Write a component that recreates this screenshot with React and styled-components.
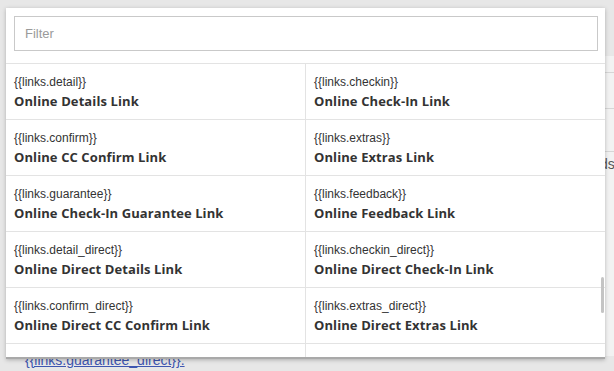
import React from "react";
import styled, { createGlobalStyle } from "styled-components";

const GlobalStyle = createGlobalStyle`
  html, body { margin: 0; padding: 0; }
  body { background: #e7e7e7; font-family: "Liberation Sans", Arial, sans-serif; }
`;

const Page = styled.div`
  position: relative;
  width: 614px;
  height: 371px;
  overflow: hidden;
  background: #e7e7e7;
`;

const BackCard = styled.div`
  margin: 56px 0 0 14px;
  height: 300px;
  background: #f2f2f2;
  display: flex;
  flex-direction: column;
  align-items: flex-end;
`;

const BackLine = styled.div`
  width: 40px;
  height: 1px;
  background: #d6d6d6;
  margin-top: ${(p) => p.$mt}px;
`;

const BackText = styled.div`
  width: 14px;
  font-size: 14px;
  line-height: 15px;
  color: #555;
  margin-top: ${(p) => p.$mt || 0}px;
`;

const BackLink = styled.a`
  position: absolute;
  left: 25px;
  top: 352px;
  font-size: 14px;
  color: #3e56b0;
  text-decoration: underline;
`;

const Panel = styled.div`
  position: absolute;
  left: 6px;
  top: 8px;
  width: 599px;
  height: 349px;
  background: #fff;
  box-shadow: 0 1px 4px rgba(0, 0, 0, 0.25);
  display: flex;
  flex-direction: column;
  overflow: hidden;
  border-bottom: 2px solid #a9a9a9;
`;

const FilterWrap = styled.div`
  padding: 8px 7px 12px 8px;
  border-bottom: 1px solid #e3e3e3;
`;

const FilterInput = styled.input`
  box-sizing: border-box;
  width: 100%;
  height: 35px;
  border: 1px solid #c9c9c9;
  padding: 0 10px;
  font-family: "Liberation Sans", Arial, sans-serif;
  font-size: 13px;
  color: #333;
  outline: none;
  &::placeholder { color: #9a9a9a; }
`;

const List = styled.div`
  position: relative;
  flex: 1;
  overflow: hidden;
  display: grid;
  grid-template-columns: 300px 299px;
  grid-auto-rows: 56px;
  align-content: start;
`;

const Cell = styled.div`
  box-sizing: border-box;
  padding: 9px 8px 0;
  border-bottom: 1px solid #e3e3e3;
  border-right: ${(p) => (p.$left ? "1px solid #e3e3e3" : "none")};
`;

const Code = styled.div`
  font-family: "Liberation Sans", Arial, sans-serif;
  font-size: 12px;
  line-height: 18px;
  color: #333;
`;

const Title = styled.div`
  font-family: "Open Sans", sans-serif;
  font-weight: 700;
  font-size: 13px;
  line-height: 20px;
  letter-spacing: 0.1px;
  color: #333;
`;

const Thumb = styled.div`
  position: absolute;
  right: 1px;
  top: 213px;
  width: 3px;
  height: 36px;
  background: #c4c4c4;
  border-radius: 2px;
`;

const items = [
  ["{{links.detail}}", "Online Details Link"],
  ["{{links.checkin}}", "Online Check-In Link"],
  ["{{links.confirm}}", "Online CC Confirm Link"],
  ["{{links.extras}}", "Online Extras Link"],
  ["{{links.guarantee}}", "Online Check-In Guarantee Link"],
  ["{{links.feedback}}", "Online Feedback Link"],
  ["{{links.detail_direct}}", "Online Direct Details Link"],
  ["{{links.checkin_direct}}", "Online Direct Check-In Link"],
  ["{{links.confirm_direct}}", "Online Direct CC Confirm Link"],
  ["{{links.extras_direct}}", "Online Direct Extras Link"],
  ["{{links.guarantee_direct}}", "Online Direct Check-In Guarantee Link"],
  ["{{links.feedback_direct}}", "Online Direct Feedback Link"],
];

export default function App() {
  return (
    <>
      <GlobalStyle />
      <Page>
        <BackCard>
          <BackLine $mt={16} />
          <BackLine $mt={35} />
          <BackLine $mt={42} />
          <BackText $mt={5}>ds</BackText>
          <BackText>)</BackText>
        </BackCard>
        <BackLink>{"{{links.guarantee_direct}}."}</BackLink>
        <Panel>
          <FilterWrap>
            <FilterInput placeholder="Filter" />
          </FilterWrap>
          <List>
            {items.map(([code, title], i) => (
              <Cell key={code} $left={i % 2 === 0}>
                <Code>{code}</Code>
                <Title>{title}</Title>
              </Cell>
            ))}
            <Thumb />
          </List>
        </Panel>
      </Page>
    </>
  );
}
